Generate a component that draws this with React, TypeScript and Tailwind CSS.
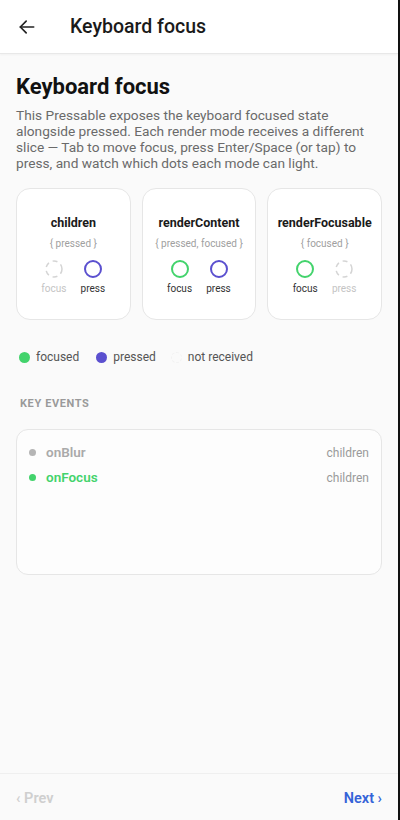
import React from "react";

const GREEN = "#43d36c";
const PURPLE = "#5b50cf";

function Ring({ color, active }: { color: string; active: boolean }) {
  return (
    <svg width="20" height="20" viewBox="0 0 20 20">
      {active ? (
        <circle cx="10" cy="10" r="8" fill="none" stroke={color} strokeWidth="2" />
      ) : (
        <circle
          cx="10"
          cy="10"
          r="8"
          fill="none"
          stroke="#d4d4d4"
          strokeWidth="1.5"
          strokeDasharray="5 4"
        />
      )}
    </svg>
  );
}

function ModeCard({
  title,
  slice,
  focus,
  press,
}: {
  title: string;
  slice: string;
  focus: boolean;
  press: boolean;
}) {
  return (
    <div className="flex-1 h-[132px] rounded-[14px] border border-[#e6e6e6] bg-white flex flex-col items-center pt-[26px]">
      <div className="text-[12.5px] font-bold text-[#1a1a1a] leading-4">{title}</div>
      <div className="text-[10px] text-[#a0a0a0] mt-[7px] leading-3">{slice}</div>
      <div className="flex gap-[13px] mt-[9px]">
        <div className="flex flex-col items-center w-[26px]">
          <Ring color={GREEN} active={focus} />
          <span className={`text-[10px] leading-3 mt-[4px] ${focus ? "text-[#333]" : "text-[#c4c4c4]"}`}>focus</span>
        </div>
        <div className="flex flex-col items-center w-[26px]">
          <Ring color={PURPLE} active={press} />
          <span className={`text-[10px] leading-3 mt-[4px] ${press ? "text-[#333]" : "text-[#c4c4c4]"}`}>press</span>
        </div>
      </div>
    </div>
  );
}

export default function App() {
  return (
    <div
      className="w-[400px] h-[820px] bg-[#fafafa] flex flex-col border-r-2 border-[#111]"
      style={{ fontFamily: "Roboto, 'Noto Sans', sans-serif" }}
    >
      {/* top bar */}
      <div className="h-[54px] bg-white flex items-center border-b border-[#e8e8e8] shadow-[0_1px_2px_rgba(0,0,0,0.04)] shrink-0">
        <svg className="ml-[17px]" width="20" height="20" viewBox="0 0 24 24" fill="none" stroke="#222" strokeWidth="2" strokeLinecap="round" strokeLinejoin="round">
          <path d="M20 12H4" />
          <path d="M11 5l-7 7 7 7" />
        </svg>
        <span className="ml-[33px] text-[19.5px] font-medium text-[#1a1a1a]">Keyboard focus</span>
      </div>

      <div className="flex-1 px-4 pt-[19px]">
        <h1 className="text-[22px] font-bold text-[#111] leading-7">Keyboard focus</h1>
        <p className="mt-[6px] text-[13.7px] leading-4 text-[#6a6a6a]">
          This Pressable exposes the keyboard focused state alongside pressed. Each render mode receives a different slice — Tab to move focus, press Enter/Space (or tap) to press, and watch which dots each mode can light.
        </p>

        <div className="flex gap-[11px] mt-[17px]">
          <ModeCard title="children" slice="{ pressed }" focus={false} press={true} />
          <ModeCard title="renderContent" slice="{ pressed, focused }" focus={true} press={true} />
          <ModeCard title="renderFocusable" slice="{ focused }" focus={true} press={false} />
        </div>

        <div className="flex items-center mt-[28px] ml-[3px] text-[12px] text-[#555]">
          <span className="w-[11px] h-[11px] rounded-full" style={{ background: GREEN }} />
          <span className="ml-[6px]">focused</span>
          <span className="ml-[17px] w-[11px] h-[11px] rounded-full" style={{ background: PURPLE }} />
          <span className="ml-[6px]">pressed</span>
          <span className="ml-[15px] w-[11px] h-[11px] rounded-full border border-dashed border-[#f2f2f2]" />
          <span className="ml-[6px]">not received</span>
        </div>

        <div className="mt-[30px] ml-[4px] text-[11px] font-bold tracking-[0.6px] text-[#9a9a9a]">KEY EVENTS</div>

        <div className="mt-[16px] h-[146px] rounded-[12px] border border-[#e6e6e6] bg-[#fdfdfd] px-[12px] pt-[13px]">
          <div className="flex items-center h-[20px]">
            <span className="w-[7px] h-[7px] rounded-full bg-[#b5b5b5]" />
            <span className="ml-[10px] text-[13.5px] font-semibold text-[#aaaaaa]">onBlur</span>
            <span className="ml-auto text-[12px] text-[#9a9a9a]">children</span>
          </div>
          <div className="flex items-center h-[20px] mt-[5px]">
            <span className="w-[7px] h-[7px] rounded-full" style={{ background: GREEN }} />
            <span className="ml-[10px] text-[13.5px] font-semibold" style={{ color: GREEN }}>onFocus</span>
            <span className="ml-auto text-[12px] text-[#9a9a9a]">children</span>
          </div>
        </div>
      </div>

      {/* footer nav */}
      <div className="h-[47px] shrink-0 border-t border-[#efefef] flex items-center justify-between px-4 pt-[4px]">
        <span className="text-[14.5px] font-semibold text-[#cfcfcf]">‹ Prev</span>
        <span className="text-[14.5px] font-semibold text-[#3563d8]">Next ›</span>
      </div>
    </div>
  );
}
